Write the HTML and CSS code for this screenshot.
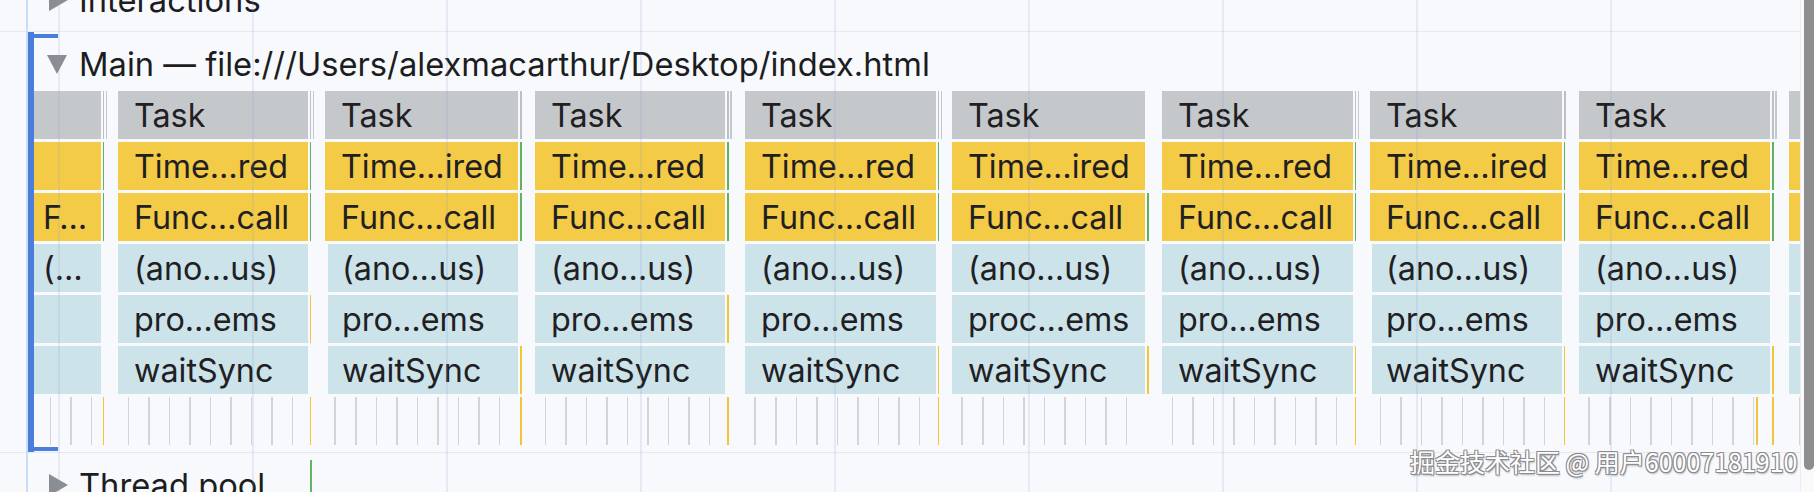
FILE: index.html
```html
<!DOCTYPE html>
<html lang="en">
<head>
<meta charset="utf-8">
<title>Performance — Main thread</title>
<link rel="stylesheet" href="styles.css">
</head>
<body>
<div class="page">
  <div class="panel">
    <div class="track interactions">
      <div class="hdr"><span class="tri tri-right"></span><span class="name">Interactions</span></div>
    </div>

    <div class="track main">
      <div class="hdr"><span class="tri tri-down"></span><span class="name">Main — file:///Users/alexmacarthur/Desktop/index.html</span></div>
      <div class="flame">
        <div class="col col-first" style="width:67px">
          <div class="ev task"></div>
          <div class="ev yel"></div>
          <div class="ev yel">F…</div>
          <div class="ev blue">(…</div>
          <div class="ev blue"></div>
          <div class="ev blue"></div>
          <div class="ticks ticks-first"></div>
        </div>
        <div class="sep" style="width:17px">
          <div class="cell l-g2"></div><div class="cell l-gr"></div><div class="cell l-gr"></div><div class="cell"></div><div class="cell"></div><div class="cell"></div><div class="tcell l-y"></div>
        </div>

        <div class="col" style="width:190px">
          <div class="ev task">Task</div>
          <div class="ev yel">Time…red</div>
          <div class="ev yel">Func…call</div>
          <div class="ev blue">(ano…us)</div>
          <div class="ev blue">pro…ems</div>
          <div class="ev blue">waitSync</div>
          <div class="ticks"></div>
        </div>
        <div class="sep" style="width:17px">
          <div class="cell l-g2"></div><div class="cell l-gr"></div><div class="cell l-gr"></div><div class="cell"></div><div class="cell l-y"></div><div class="cell"></div><div class="tcell l-y"></div>
        </div>

        <div class="col" style="width:193px">
          <div class="ev task">Task</div>
          <div class="ev yel">Time…ired</div>
          <div class="ev yel">Func…call</div>
          <div class="ev blue inset">(ano…us)</div>
          <div class="ev blue inset">pro…ems</div>
          <div class="ev blue inset">waitSync</div>
          <div class="ticks"></div>
        </div>
        <div class="sep" style="width:17px">
          <div class="cell l-g"></div><div class="cell l-gr"></div><div class="cell l-gr"></div><div class="cell"></div><div class="cell"></div><div class="cell l-y"></div><div class="tcell l-y"></div>
        </div>

        <div class="col" style="width:190px">
          <div class="ev task">Task</div>
          <div class="ev yel">Time…red</div>
          <div class="ev yel">Func…call</div>
          <div class="ev blue">(ano…us)</div>
          <div class="ev blue">pro…ems</div>
          <div class="ev blue">waitSync</div>
          <div class="ticks"></div>
        </div>
        <div class="sep" style="width:20px">
          <div class="cell l-g2"></div><div class="cell l-gr"></div><div class="cell l-gr"></div><div class="cell"></div><div class="cell l-y"></div><div class="cell"></div><div class="tcell l-y"></div>
        </div>

        <div class="col" style="width:191px">
          <div class="ev task">Task</div>
          <div class="ev yel">Time…red</div>
          <div class="ev yel">Func…call</div>
          <div class="ev blue">(ano…us)</div>
          <div class="ev blue">pro…ems</div>
          <div class="ev blue">waitSync</div>
          <div class="ticks"></div>
        </div>
        <div class="sep" style="width:16px">
          <div class="cell l-g2"></div><div class="cell l-gr"></div><div class="cell l-gr"></div><div class="cell"></div><div class="cell"></div><div class="cell l-y"></div><div class="tcell l-y"></div>
        </div>

        <div class="col" style="width:193px">
          <div class="ev task">Task</div>
          <div class="ev yel">Time…ired</div>
          <div class="ev yel">Func…call</div>
          <div class="ev blue">(ano…us)</div>
          <div class="ev blue">proc…ems</div>
          <div class="ev blue">waitSync</div>
          <div class="ticks"></div>
        </div>
        <div class="sep" style="width:17px">
          <div class="cell"></div><div class="cell"></div><div class="cell l-gr"></div><div class="cell"></div><div class="cell"></div><div class="cell l-y"></div><div class="tcell"></div>
        </div>

        <div class="col" style="width:191px">
          <div class="ev task">Task</div>
          <div class="ev yel">Time…red</div>
          <div class="ev yel">Func…call</div>
          <div class="ev blue">(ano…us)</div>
          <div class="ev blue">pro…ems</div>
          <div class="ev blue">waitSync</div>
          <div class="ticks"></div>
        </div>
        <div class="sep" style="width:17px">
          <div class="cell l-g2"></div><div class="cell l-gr"></div><div class="cell l-gr"></div><div class="cell"></div><div class="cell"></div><div class="cell l-y"></div><div class="tcell l-y"></div>
        </div>

        <div class="col" style="width:192px">
          <div class="ev task">Task</div>
          <div class="ev yel">Time…ired</div>
          <div class="ev yel">Func…call</div>
          <div class="ev blue inset-s">(ano…us)</div>
          <div class="ev blue inset-s">pro…ems</div>
          <div class="ev blue inset-s">waitSync</div>
          <div class="ticks"></div>
        </div>
        <div class="sep" style="width:17px">
          <div class="cell l-g"></div><div class="cell l-gr"></div><div class="cell l-gr"></div><div class="cell"></div><div class="cell"></div><div class="cell l-y"></div><div class="tcell l-y"></div>
        </div>

        <div class="col" style="width:191px">
          <div class="ev task">Task</div>
          <div class="ev yel">Time…red</div>
          <div class="ev yel">Func…call</div>
          <div class="ev blue">(ano…us)</div>
          <div class="ev blue">pro…ems</div>
          <div class="ev blue">waitSync</div>
          <div class="ticks ticks-late"></div>
        </div>
        <div class="sep" style="width:19px">
          <div class="cell l-g2"></div><div class="cell l-gr"></div><div class="cell l-gr"></div><div class="cell"></div><div class="cell"></div><div class="cell l-y"></div><div class="tcell l-y"></div>
        </div>

        <div class="col col-last">
          <div class="ev task"></div>
          <div class="ev yel"></div>
          <div class="ev yel"></div>
          <div class="ev blue"></div>
          <div class="ev blue"></div>
          <div class="ev blue"></div>
          <div class="ticks"></div>
        </div>
      </div>
    </div>

    <div class="track threadpool">
      <div class="hdr"><span class="tri tri-right"></span><span class="name">Thread pool</span></div>
      <div class="tp-event"></div>
    </div>

    <div class="gridlines"></div>
    <div class="watermark">掘金技术社区 @ 用户60007181910</div>
  </div>
  <div class="scrollbar"><div class="thumb"></div></div>
</div>
</body>
</html>
```

FILE: styles.css
```css
* { box-sizing: border-box; }

html, body {
  margin: 0;
  padding: 0;
  background: #f8f9fd;
}

body {
  width: 1814px;
  height: 492px;
  overflow: hidden;
  font-family: Inter, "Noto Sans", "Liberation Sans", sans-serif;
  color: #1f2023;
}

.page {
  display: flex;
  width: 1814px;
  height: 492px;
}

.panel {
  position: relative;
  width: 1800px;
  height: 492px;
  overflow: hidden;
  display: flex;
  flex-direction: column;
}

/* ---------- tracks ---------- */
.track {
  flex: none;
  border-bottom: 1px solid #e7e9ef;
}

.hdr {
  height: 54px;
  display: flex;
  align-items: center;
  gap: 12px;
  padding-left: 47px;
  white-space: nowrap;
}

.name {
  font-size: 32.7px;
  color: #1c1d20;
}

.tri {
  display: block;
  width: 0;
  height: 0;
  flex: none;
}

.tri-right {
  margin-left: 2px;
  border-left: 19px solid #8a8d92;
  border-top: 11px solid transparent;
  border-bottom: 11px solid transparent;
  margin-right: -1px;
}

.tri-down {
  border-top: 19px solid #8a8d92;
  border-left: 10.5px solid transparent;
  border-right: 10.5px solid transparent;
}

.interactions {
  height: 32px;
  overflow: hidden;
}
.interactions .hdr {
  margin-top: -27px;
}

.main {
  position: relative;
  margin-left: 28px;
  border-left: 6px solid #4b7ddb;
  padding-top: 5px;
  padding-bottom: 7px;
  border-bottom: none;
}
.main .hdr {
  padding-left: 13px;
}
.main::before,
.main::after {
  content: "";
  position: absolute;
  left: 0;
  width: 24px;
  height: 4px;
  background: #4b7ddb;
}
.main::before { top: 2px; }
.main::after { bottom: 1px; }

.threadpool {
  position: relative;
  border-top: 1px solid #e7e9ef;
  border-bottom: none;
  padding-top: 5px;
  height: 80px;
}

.tp-event {
  position: absolute;
  left: 310px;
  top: 7px;
  width: 2px;
  height: 40px;
  background: #62b566;
}

/* ---------- flame chart ---------- */
.flame {
  display: flex;
  align-items: flex-start;
}

.col, .sep {
  flex: none;
  display: flex;
  flex-direction: column;
  gap: 3px;
}

.col-last {
  width: 11px;
}

.ev {
  height: 48px;
  display: flex;
  align-items: center;
  padding-left: 16px;
  white-space: nowrap;
  overflow: hidden;
  font-size: 32.3px;
  color: #1f2023;
}

.col-first .ev { padding-left: 9px; }

.task { background: #c5c8cb; }
.yel  { background: #f4cb46; }
.blue { background: #cde3ea; }

.inset { margin-left: 3px; padding-left: 14px; }
.inset-s { margin-left: 2px; padding-left: 14px; }

.ticks, .tcell {
  height: 48px;
}

.ticks {
  background: repeating-linear-gradient(90deg,
    transparent 0, transparent 9.5px,
    #d2d4d8 9.5px, #d2d4d8 11px,
    transparent 11px, transparent 20.5px);
}
.ticks-first {
  background-position: 6px 0;
}
.ticks-late {
  background-image:
    linear-gradient(90deg, transparent 177px, #f0c53a 177px, #f0c53a 179px, transparent 179px),
    repeating-linear-gradient(90deg,
      transparent 0, transparent 9.5px,
      #d2d4d8 9.5px, #d2d4d8 11px,
      transparent 11px, transparent 20.5px);
}

.cell { height: 48px; }

.l-g  { background: linear-gradient(90deg, transparent 2px, #bcc0c5 2px, #bcc0c5 4px, transparent 4px); }
.l-g2 { background: linear-gradient(90deg, transparent 2px, #bcc0c5 2px, #bcc0c5 3.5px, transparent 3.5px, transparent 5px, #c5c8cb 5px, #c5c8cb 6.5px, transparent 6.5px); }
.l-gr { background: linear-gradient(90deg, transparent 2px, #5fb25f 2px, #5fb25f 3.5px, transparent 3.5px); }
.l-y  { background: linear-gradient(90deg, transparent 2px, #f0c53a 2px, #f0c53a 3.5px, transparent 3.5px); }

/* ---------- overlays ---------- */
.gridlines {
  position: absolute;
  inset: 0;
  pointer-events: none;
  background:
    linear-gradient(90deg, transparent 26px, rgba(196, 218, 245, 0.9) 26px, rgba(196, 218, 245, 0.9) 28px, transparent 28px),
    repeating-linear-gradient(90deg,
      transparent 0, transparent 58px,
      rgba(130, 150, 205, 0.16) 58px, rgba(130, 150, 205, 0.16) 60px,
      transparent 60px, transparent 194px);
}

.watermark {
  position: absolute;
  left: 1410px;
  top: 446px;
  font-family: "Noto Sans CJK SC", "Noto Sans", sans-serif;
  font-size: 25px;
  line-height: 30px;
  color: #ffffff;
  white-space: nowrap;
  text-shadow:
    -1px -1px 0 #8a8b8f, 1px -1px 0 #8a8b8f,
    -1px 1px 0 #8a8b8f, 1px 1px 0 #8a8b8f,
    1px 2px 2px rgba(0, 0, 0, 0.3);
}

/* ---------- scrollbar ---------- */
.scrollbar {
  flex: none;
  width: 14px;
  height: 492px;
  background: #fafafa;
  border-left: 1px solid #ededf0;
  position: relative;
}
.thumb {
  margin-left: 3px;
  margin-top: -10px;
  width: 10px;
  height: 480px;
  border-radius: 5px;
  background: #8e8e91;
}
```
